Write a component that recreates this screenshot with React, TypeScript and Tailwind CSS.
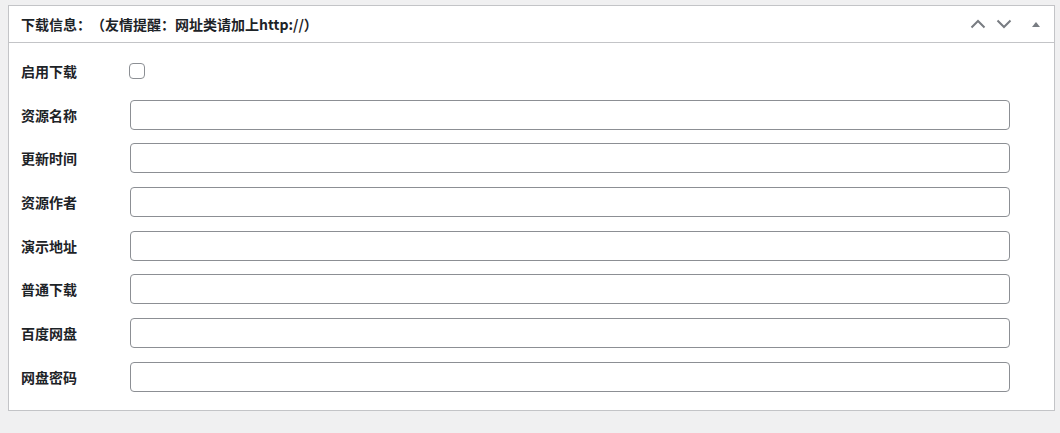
const fields = ["资源名称", "更新时间", "资源作者", "演示地址", "普通下载", "百度网盘", "网盘密码"];

function Chevron({ up }: { up?: boolean }) {
  return (
    <svg width="16" height="10" viewBox="0 0 16 10" className="text-[#787c82]">
      <path
        d={up ? "M1.5 8.5 L8 2 L14.5 8.5" : "M1.5 1.5 L8 8 L14.5 1.5"}
        fill="none"
        stroke="currentColor"
        strokeWidth="2"
      />
    </svg>
  );
}

export default function App() {
  return (
    <div
      className="min-h-screen bg-[#f0f0f1] pt-[5px] pl-[8px] pr-[5px] text-[#1d2327] [text-spacing-trim:space-all]"
      style={{ fontFamily: '"Noto Sans CJK SC", "Liberation Sans", sans-serif' }}
    >
      <div className="w-[1047px] border border-[#c3c4c7] bg-white">
        <div className="flex h-[37px] items-center justify-between border-b border-[#c3c4c7] pl-[12px] pr-[14px]">
          <h2 className="text-[14px] font-semibold leading-none">下载信息：（友情提醒：网址类请加上http://）</h2>
          <div className="flex items-center">
            <span className="mr-[10px] flex"><Chevron up /></span>
            <span className="mr-[20px] flex"><Chevron /></span>
            <svg width="8" height="5" viewBox="0 0 8 5" className="text-[#787c82]">
              <path d="M0 5 L4 0 L8 5 Z" fill="currentColor" />
            </svg>
          </div>
        </div>

        <div className="flex flex-col gap-[13.7px] pt-[13px] pb-[18px] pl-[12px]">
          <div className="flex h-[30px] items-center">
            <label className="w-[108px] text-[14px] font-semibold leading-none">启用下载</label>
            <input
              type="checkbox"
              className="h-[16px] w-[16px] appearance-none rounded-[4px] border border-[#8c8f94] bg-white"
            />
          </div>
          {fields.map((f) => (
            <div key={f} className="flex h-[30px] items-center">
              <label className="w-[109px] text-[14px] font-semibold leading-none">{f}</label>
              <input
                type="text"
                className="h-[30px] w-[880px] rounded-[4px] border border-[#8c8f94] bg-white px-2 text-[14px] outline-none"
              />
            </div>
          ))}
        </div>
      </div>
    </div>
  );
}
